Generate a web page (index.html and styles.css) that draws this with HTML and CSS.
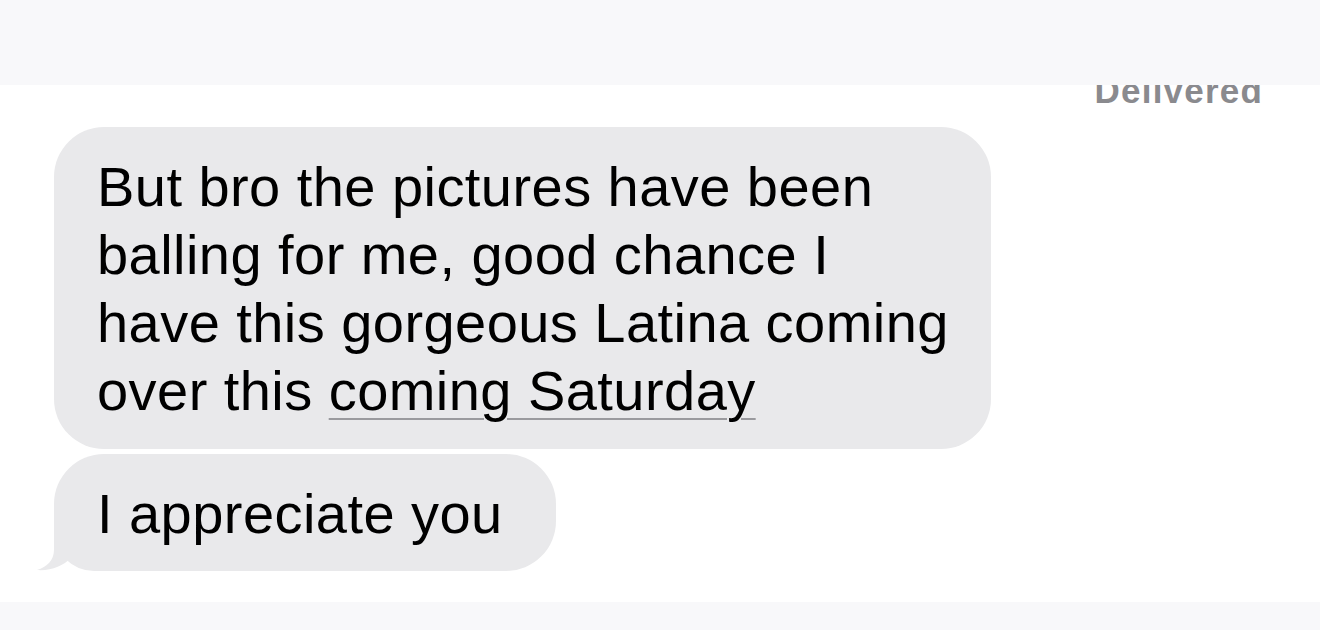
FILE: index.html
```html
<!DOCTYPE html>
<html>
<head>
<meta charset="utf-8">
<link rel="stylesheet" href="styles.css">
</head>
<body>
<div class="screen">
  <header class="topbar"></header>
  <main class="thread">
    <div class="status">Delivered</div>
    <div class="bubble first">But bro the pictures have been<br>balling for me, good chance I<br>have this gorgeous Latina coming<br>over this <span class="link">coming Saturday</span></div>
    <div class="bubble last"><svg class="tail" width="70" height="41" viewBox="0 0 70 41"><path d="M17,0 L17,20 C17,30 10,37 0,40 C14,41 26,36 34,28 C44,36 56,41 70,41 L70,0 Z" fill="#e9e9eb"/></svg><span class="text">I appreciate you</span></div>
  </main>
  <footer class="bottombar"></footer>
</div>
</body>
</html>
```
FILE: styles.css
```css
html, body {
  margin: 0;
  padding: 0;
  background: #ffffff;
}
.screen {
  width: 1320px;
  height: 630px;
  display: flex;
  flex-direction: column;
  overflow: hidden;
  font-family: "Liberation Sans", Arial, sans-serif;
}
.topbar {
  height: 85px;
  flex: 0 0 85px;
  background: #f8f8fa;
  position: relative;
  z-index: 2;
}
.thread {
  flex: 1;
  display: flex;
  flex-direction: column;
  align-items: flex-start;
  padding-left: 54px;
}
.status {
  align-self: flex-end;
  margin-top: -14px;
  margin-right: 57px;
  font-size: 35px;
  line-height: 40px;
  font-weight: bold;
  color: #8a8a8e;
  letter-spacing: 1.2px;
  position: relative;
  z-index: 1;
}
.bubble {
  background: #e9e9eb;
  color: #000;
  font-size: 56px;
  letter-spacing: 0.45px;
  line-height: 68px;
  border-radius: 50px;
  padding: 26px 42px 24px 43px;
  width: fit-content;
  white-space: nowrap;
  position: relative;
}
.bubble.first {
  margin-top: 16px;
}
.bubble.last {
  margin-top: 5px;
  padding: 26px 53px 23px 43px;
  border-bottom-left-radius: 40px;
}
.text {
  position: relative;
}
.link {
  text-decoration: underline;
  text-decoration-color: #9a9a9e;
  text-decoration-thickness: 2px;
  text-underline-offset: 8px;
  text-decoration-skip-ink: auto;
}
.tail {
  position: absolute;
  left: -17px;
  bottom: 0;
  display: block;
}
.bottombar {
  margin-top: auto;
  height: 28px;
  flex: 0 0 28px;
  background: #f8f8fa;
}
```
